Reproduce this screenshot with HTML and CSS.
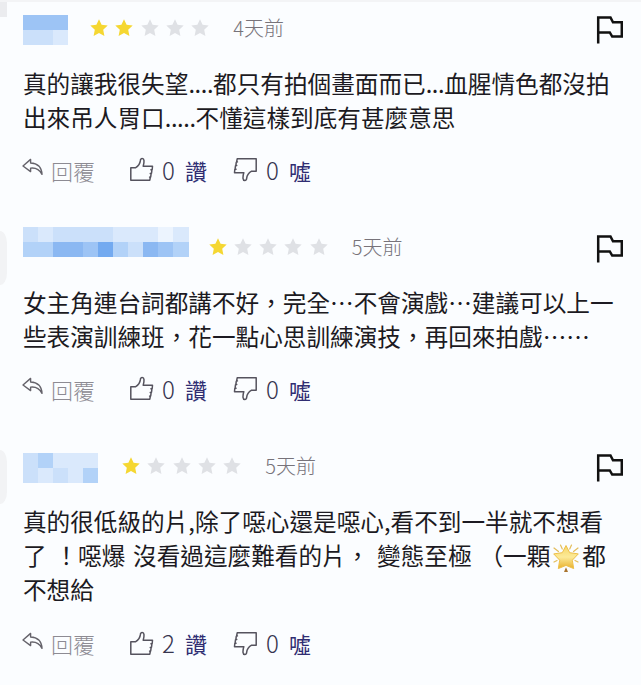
FILE: index.html
```html
<!DOCTYPE html>
<html lang="zh-TW">
<head>
    <meta charset="UTF-8">
    <meta name="viewport" content="width=device-width, initial-scale=1.0">
    <title>評論</title>
    <link rel="stylesheet" href="styles.css">
</head>
<body>
    <!-- Icons -->
    <svg class="sprite" width="0" height="0">
        <symbol id="star" viewBox="0 0 18 18">
            <path d="M9 .3l2.6 5.4 6.1.8-4.5 4.2 1.2 6.2L9 14l-5.4 2.9 1.2-6.2L.3 6.5l6.1-.8z"/>
        </symbol>
        <symbol id="flag" viewBox="0 0 28 30">
            <path d="M3.2 28.5V2.5h12.3l2.5 4.8h8.8v14.3H17.2l-2.4-4.2H3.2" fill="none" stroke="currentColor" stroke-width="2.5"/>
        </symbol>
        <symbol id="reply" viewBox="0 0 22 18">
            <path d="M8.6 1.4L1 8l7.6 5.6v-3.5c5.4-.7 8.8 1.3 11.4 6.2C19.6 9.6 15.8 5.3 8.6 5z" fill="none" stroke="currentColor" stroke-width="1.4" stroke-linejoin="round"/>
        </symbol>
        <symbol id="thumb" viewBox="0 0 25 25">
            <path d="M1.8 10.8h4.6c3-1.7 4.7-4.2 5-7.4.1-2.6 3.4-2.5 3.6.2.1 2-.2 3.8-.8 5.6h9.3l-.3 3.3-1.2.3.9.4-.4 3-1.2.3.8.4-.4 2.9-1.1.3.7.4-.5 2.7H1.8z" fill="none" stroke="currentColor" stroke-width="1.5" stroke-linejoin="round"/>
        </symbol>
        <symbol id="glow" viewBox="0 0 28 30">
            <g stroke="#e3bd5b" stroke-width="1.2" stroke-linecap="round">
                <path d="M8.5 2l1.8 4M19.5 2l-1.8 4M2 5l4.5 3.5M26 5l-4.5 3.5M2 19l3-1.5M26 19l-3-1.5"/>
            </g>
            <path d="M14 2.5l3.7 7.2 8.6 1.2-6 6.3 1.4 8.4L14 22.4l-7.7 3.2 1.4-8.4-6-6.3 8.6-1.2z" fill="url(#gold)" stroke="#eec04a" stroke-width="1" stroke-linejoin="round"/>
            <path d="M14 24.3l2 4.7h-4z" fill="#a9742e"/>
        </symbol>
        <defs>
            <linearGradient id="gold" x1="0" y1="0" x2="0" y2="1">
                <stop offset="0" stop-color="#f5d565"/>
                <stop offset=".5" stop-color="#fcea98"/>
                <stop offset="1" stop-color="#e8b02c"/>
            </linearGradient>
        </defs>
    </svg>

    <div class="reviews">
        <!-- Review 1 -->
        <div class="review">
            <div class="avatar avatar-top"></div>
            <div class="content">
                <div class="header">
                    <div class="username cols-3">
                        <i class="c5"></i><i class="c5"></i><i class="c5"></i>
                        <i class="c3"></i><i class="c3"></i><i class="c2"></i>
                    </div>
                    <div class="stars">
                        <svg class="on"><use href="#star"/></svg>
                        <svg class="on"><use href="#star"/></svg>
                        <svg><use href="#star"/></svg>
                        <svg><use href="#star"/></svg>
                        <svg><use href="#star"/></svg>
                    </div>
                    <span class="date">4天前</span>
                    <svg class="flag"><use href="#flag"/></svg>
                </div>
                <p class="text">真的讓我很失望<span class="dots">....</span>都只有拍個畫面而已<span class="dots">...</span>血腥情色都沒拍<br>出來吊人胃口<span class="dots">.....</span>不懂這樣到底有甚麼意思</p>
                <div class="actions">
                    <a class="reply"><svg><use href="#reply"/></svg>回覆</a>
                    <a class="vote"><svg><use href="#thumb"/></svg><span class="count">0</span>讚</a>
                    <a class="vote down"><svg><use href="#thumb"/></svg><span class="count">0</span>噓</a>
                </div>
            </div>
        </div>

        <!-- Review 2 -->
        <div class="review">
            <div class="avatar"></div>
            <div class="content">
                <div class="header">
                    <div class="username cols-11">
                        <i class="c3"></i><i class="c2"></i><i class="c3"></i><i class="c3"></i><i class="c3"></i><i class="c3"></i><i class="c2"></i><i class="c2"></i><i class="c2"></i><i class="c1"></i><i class="c2"></i>
                        <i class="c4"></i><i class="c4"></i><i class="c6"></i><i class="c6"></i><i class="c5"></i><i class="c7"></i><i class="c4"></i><i class="c3"></i><i class="c6"></i><i class="c5"></i><i class="c4"></i>
                    </div>
                    <div class="stars">
                        <svg class="on"><use href="#star"/></svg>
                        <svg><use href="#star"/></svg>
                        <svg><use href="#star"/></svg>
                        <svg><use href="#star"/></svg>
                        <svg><use href="#star"/></svg>
                    </div>
                    <span class="date">5天前</span>
                    <svg class="flag"><use href="#flag"/></svg>
                </div>
                <p class="text">女主角連台詞都講不好，完全⋯不會演戲⋯建議可以上一<br>些表演訓練班，花一點心思訓練演技，再回來拍戲⋯⋯</p>
                <div class="actions">
                    <a class="reply"><svg><use href="#reply"/></svg>回覆</a>
                    <a class="vote"><svg><use href="#thumb"/></svg><span class="count">0</span>讚</a>
                    <a class="vote down"><svg><use href="#thumb"/></svg><span class="count">0</span>噓</a>
                </div>
            </div>
        </div>

        <!-- Review 3 -->
        <div class="review">
            <div class="avatar"></div>
            <div class="content">
                <div class="header">
                    <div class="username cols-5">
                        <i class="c3"></i><i class="c4"></i><i class="c2"></i><i class="c2"></i><i class="c2"></i>
                        <i class="c3"></i><i class="c2"></i><i class="c3"></i><i class="c2"></i><i class="c4"></i>
                    </div>
                    <div class="stars">
                        <svg class="on"><use href="#star"/></svg>
                        <svg><use href="#star"/></svg>
                        <svg><use href="#star"/></svg>
                        <svg><use href="#star"/></svg>
                        <svg><use href="#star"/></svg>
                    </div>
                    <span class="date">5天前</span>
                    <svg class="flag"><use href="#flag"/></svg>
                </div>
                <p class="text">真的很低級的片,除了噁心還是噁心,看不到一半就不想看<br>了 ！噁爆 沒看過這麼難看的片， 變態至極 （一顆<svg class="emoji"><use href="#glow"/></svg>都<br>不想給</p>
                <div class="actions">
                    <a class="reply"><svg><use href="#reply"/></svg>回覆</a>
                    <a class="vote"><svg><use href="#thumb"/></svg><span class="count">2</span>讚</a>
                    <a class="vote down"><svg><use href="#thumb"/></svg><span class="count">0</span>噓</a>
                </div>
            </div>
        </div>
    </div>
</body>
</html>
```
FILE: styles.css
```css
* {
    box-sizing: border-box;
    margin: 0;
    padding: 0;
}
body {
    background-color: #fbfdff;
    color: #1c1a22;
    font-family: 'Noto Sans CJK TC', sans-serif;
    overflow: hidden;
}
.sprite {
    display: block;
}
.reviews {
    height: 685px;
    border-top: 2px solid #f3f4f6;
}
.review {
    display: flex;
    height: 219px;
    padding-top: 12px;
}
.review + .review {
    padding-top: 14px;
}
.review:first-child {
    height: 217px;
}
.review:last-child {
    height: 247px;
}
/* right edge of the avatar */
.avatar {
    flex: none;
    width: 7px;
    height: 54px;
    margin-top: -2px;
    background-color: #f2f3f5;
    border-top-right-radius: 7px 12px;
    border-bottom-right-radius: 7px 12px;
}
.avatar-top {
    height: 15px;
    margin-top: -12px;
    background-color: #ebecef;
    border-radius: 0;
}
.content {
    flex: 1;
    padding: 0 15px 0 16px;
}
.header {
    display: flex;
    align-items: center;
    height: 32px;
}
.username {
    display: grid;
    grid-template-rows: 15px 15px;
    margin-right: 22px;
}
.cols-3 {
    grid-template-columns: repeat(3, 15px);
}
.cols-5 {
    grid-template-columns: repeat(5, 15px);
    margin-right: 24px;
}
.cols-11 {
    grid-template-columns: repeat(11, 15.05px);
    margin-right: 20px;
    margin-bottom: 14px;
}
.c1 { background-color: #ecf4fe; }
.c2 { background-color: #dae9fc; }
.c3 { background-color: #cbe0fa; }
.c4 { background-color: #b2d2f8; }
.c5 { background-color: #9dc4f5; }
.c6 { background-color: #8bb8f2; }
.c7 { background-color: #73aaf0; }
.stars {
    display: flex;
    gap: 7.3px;
    margin-bottom: 5px;
}
.stars svg {
    width: 18px;
    height: 18px;
    fill: #dfe1e5;
}
.stars .on {
    fill: #f5d732;
}
.date {
    margin: 0 auto 5px 24px;
    color: #77737a;
    font-size: 20px;
    font-weight: 300;
    line-height: 28px;
}
.flag {
    width: 28px;
    height: 30px;
    margin-right: 3px;
    color: #111;
}
.text {
    margin-top: 21px;
    font-size: 23.64px;
    line-height: 33.8px;
    white-space: nowrap;
    word-spacing: 2.5px;
}
.dots {
    letter-spacing: -0.4px;
}
.emoji {
    width: 28px;
    height: 30px;
    margin: -6px 2px -6px 2px;
    vertical-align: -2px;
}
.actions {
    display: flex;
    align-items: center;
    height: 30px;
    margin-top: 20px;
    font-size: 22px;
    line-height: 30px;
}
.review:last-child .actions {
    margin-top: 22px;
}
.reply {
    display: flex;
    align-items: center;
    width: 106px;
    color: #8d8b93;
    font-weight: 300;
}
.reply svg {
    width: 22px;
    height: 18px;
    margin: -5px 7px 0 -1px;
    color: #65636b;
}
.vote {
    display: flex;
    align-items: center;
    width: 104px;
    color: #302d72;
}
.vote svg {
    width: 25px;
    height: 25px;
    margin-right: 8px;
    color: #55535e;
}
.down svg {
    transform: rotate(180deg);
}
.count {
    width: 23px;
    color: #37354f;
    font-size: 24px;
    font-weight: 300;
}
```
